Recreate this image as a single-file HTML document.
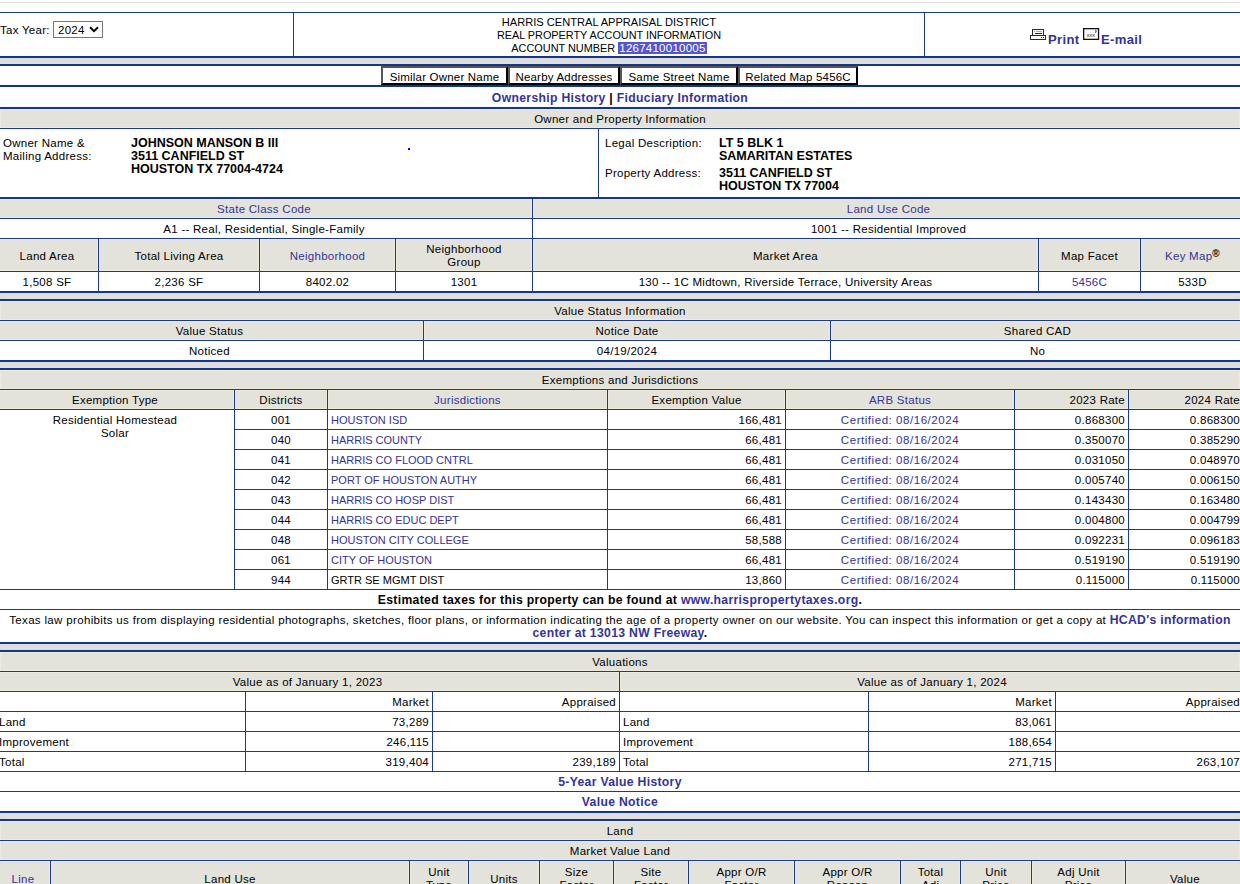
<!DOCTYPE html>
<html><head><meta charset="utf-8"><title>HCAD</title>
<style>
html,body{margin:0;padding:0;background:#fff}
body{width:1240px;height:884px;overflow:hidden;position:relative;font-family:"Liberation Sans",sans-serif;font-size:11.5px;letter-spacing:0.27px;color:#000}
.r{position:absolute}
.g{background:#e3e3dc;box-shadow:inset 0 0 0 1px #ecebde}
.t{position:absolute;display:flex;line-height:13px;white-space:nowrap;box-sizing:border-box}
.in{position:relative;top:1px}
.c{justify-content:center;text-align:center}
.l{justify-content:flex-start;padding-left:3px}
.rt{justify-content:flex-end;padding-right:3px}
.r5{padding-right:4px}
.b{font-weight:bold;font-size:12.2px;letter-spacing:0.32px}
.bc{font-weight:bold;font-size:12.5px;letter-spacing:0}
.a{color:#333399}
.txt{line-height:13px;white-space:nowrap}
.uc{font-size:11px;letter-spacing:0}
.up{font-size:11.2px;line-height:13px;letter-spacing:0}
.sel{background:#5656cc;color:#fff;font-size:11.5px;letter-spacing:0.25px;padding:0 1px}
.dt{letter-spacing:0.55px}
.reg{font-size:10px;font-weight:bold;color:#000;vertical-align:top;position:relative;top:-1px;line-height:9px;margin-left:0px}
.btn{position:absolute;border:2px solid;border-color:#555 #000 #000 #555;background:#fff;line-height:19px;text-align:center;white-space:nowrap;font-size:11.5px;letter-spacing:0.2px}
</style></head><body>
<div class="r" style="left:0px;top:2px;width:1240px;height:1px;background:#e0e2de"></div>
<div class="r" style="left:0px;top:12px;width:1240px;height:1px;background:#1b3a8b"></div>
<div class="r" style="left:293px;top:12px;width:1px;height:44px;background:#1b3a8b"></div>
<div class="r" style="left:924px;top:12px;width:1px;height:44px;background:#1b3a8b"></div>
<div class="r" style="left:0px;top:56px;width:1240px;height:2px;background:#16368a"></div>
<div class="r txt" style="left:0px;top:24px">Tax Year:</div>
<div class="r" style="left:53px;top:21px;width:48px;height:15px;border:1px solid #767676;background:#fff"></div>
<div class="r txt" style="left:58px;top:24px">2024</div>
<svg class="r" style="left:89px;top:26px" width="10" height="7" viewBox="0 0 10 7"><path d="M1 1.2 L5 5.2 L9 1.2" fill="none" stroke="#000" stroke-width="2"/></svg>
<div class="t c" style="left:294px;top:13px;width:630px;height:43px;align-items:center;"><span class="in"><div class="up"><span style="font-size:11.1px">HARRIS CENTRAL APPRAISAL DISTRICT</span><br><span style="font-size:10.85px">REAL PROPERTY ACCOUNT INFORMATION</span><br><span style="font-size:10.9px">ACCOUNT NUMBER </span><span class="sel">1267410010005</span></div></span></div>
<svg class="r" style="left:1030px;top:29px" width="17" height="11" viewBox="0 0 17 11" shape-rendering="crispEdges"><rect x="2.5" y="0.5" width="11" height="6" fill="#fff" stroke="#2a2a2a" stroke-width="1"/><rect x="4" y="2" width="1" height="1" fill="#7fb8f0"/><rect x="6" y="2" width="6" height="1" fill="#7fb8f0"/><rect x="5" y="4" width="7" height="1" fill="#2a2a2a"/><rect x="0.5" y="6.5" width="15" height="4" fill="#fff" stroke="#2a2a2a" stroke-width="1"/><rect x="11" y="8" width="1" height="1" fill="#2a2a2a"/><rect x="13" y="8" width="1" height="1" fill="#2a2a2a"/></svg>
<div class="r b a" style="left:1048px;top:33px;line-height:13px;font-size:13.1px">Print</div>
<svg class="r" style="left:1083px;top:28px" width="17" height="12" viewBox="0 0 17 12"><rect x="0.65" y="0.65" width="14.9" height="10.7" fill="#fff" stroke="#111" stroke-width="1.3"/><text x="3.6" y="8.9" font-size="6.2" font-family="Liberation Sans" fill="#333" letter-spacing="-0.4">xxx</text><path d="M12 2 Q14.2 2.8 12.2 4.8" fill="none" stroke="#3a6cc8" stroke-width="1.3"/></svg>
<div class="r b a" style="left:1101px;top:33px;line-height:13px;font-size:13.1px">E-mail</div>
<div class="r" style="left:0px;top:58px;width:1240px;height:6px;background:#dedede"></div>
<div class="r" style="left:0px;top:64px;width:1240px;height:2px;background:#16368a"></div>
<div class="btn" style="left:381px;top:66px;width:123px;height:15px">Similar Owner Name</div>
<div class="btn" style="left:508px;top:66px;width:108px;height:15px">Nearby Addresses</div>
<div class="btn" style="left:620px;top:66px;width:114px;height:15px">Same Street Name</div>
<div class="btn" style="left:738px;top:66px;width:116px;height:15px">Related Map 5456C</div>
<div class="r" style="left:0px;top:85px;width:1240px;height:2px;background:#16368a"></div>
<div class="t c" style="left:-4px;top:87px;width:1248px;height:20px;align-items:center;"><span class="in"><span class="a b">Ownership History</span><span class="b"> | </span><span class="a b">Fiduciary Information</span></span></div>
<div class="r" style="left:0px;top:107px;width:1240px;height:2px;background:#16368a"></div>
<div class="r g" style="left:0px;top:109px;width:1240px;height:19px"></div>
<div class="t c" style="left:-4px;top:109px;width:1248px;height:19px;align-items:center;"><span class="in">Owner and Property Information</span></div>
<div class="r" style="left:0px;top:128px;width:1240px;height:1px;background:#1b3a8b"></div>
<div class="r" style="left:598px;top:129px;width:1px;height:68px;background:#1b3a8b"></div>
<div class="r txt" style="left:3px;top:136.5px">Owner Name &amp;<br>Mailing Address:</div>
<div class="r txt bc" style="left:131px;top:136.5px">JOHNSON MANSON B III<br>3511 CANFIELD ST<br>HOUSTON TX 77004-4724</div>
<div class="r" style="left:408px;top:148px;width:2px;height:2px;background:#0000ff"></div>
<div class="r txt" style="left:605px;top:136.5px">Legal Description:</div>
<div class="r txt bc" style="left:719px;top:136.5px">LT 5 BLK 1<br>SAMARITAN ESTATES</div>
<div class="r txt" style="left:605px;top:166.5px">Property Address:</div>
<div class="r txt bc" style="left:719px;top:166.5px">3511 CANFIELD ST<br>HOUSTON TX 77004</div>
<div class="r" style="left:0px;top:197px;width:1240px;height:2px;background:#16368a"></div>
<div class="r g" style="left:-4px;top:199px;width:536px;height:19px"></div>
<div class="r g" style="left:533px;top:199px;width:711px;height:19px"></div>
<div class="t c" style="left:-4px;top:199px;width:536px;height:19px;align-items:center;"><span class="in"><span class="a">State Class Code</span></span></div>
<div class="t c" style="left:533px;top:199px;width:711px;height:19px;align-items:center;"><span class="in"><span class="a">Land Use Code</span></span></div>
<div class="r" style="left:0px;top:218px;width:1240px;height:1px;background:#1b3a8b"></div>
<div class="t c" style="left:-4px;top:219px;width:536px;height:19px;align-items:center;"><span class="in">A1 -- Real, Residential, Single-Family</span></div>
<div class="t c" style="left:533px;top:219px;width:711px;height:19px;align-items:center;"><span class="in">1001 -- Residential Improved</span></div>
<div class="r" style="left:0px;top:238px;width:1240px;height:1px;background:#1b3a8b"></div>
<div class="r g" style="left:-4px;top:239px;width:102px;height:32px"></div>
<div class="t c" style="left:-4px;top:239px;width:102px;height:32px;align-items:center;"><span class="in">Land Area</span></div>
<div class="t c" style="left:-4px;top:272px;width:102px;height:19px;align-items:center;"><span class="in">1,508 SF</span></div>
<div class="r g" style="left:99px;top:239px;width:160px;height:32px"></div>
<div class="t c" style="left:99px;top:239px;width:160px;height:32px;align-items:center;"><span class="in">Total Living Area</span></div>
<div class="t c" style="left:99px;top:272px;width:160px;height:19px;align-items:center;"><span class="in">2,236 SF</span></div>
<div class="r g" style="left:260px;top:239px;width:135px;height:32px"></div>
<div class="t c" style="left:260px;top:239px;width:135px;height:32px;align-items:center;"><span class="in"><span class="a">Neighborhood</span></span></div>
<div class="t c" style="left:260px;top:272px;width:135px;height:19px;align-items:center;"><span class="in">8402.02</span></div>
<div class="r g" style="left:396px;top:239px;width:136px;height:32px"></div>
<div class="t c" style="left:396px;top:239px;width:136px;height:32px;align-items:center;"><span class="in">Neighborhood<br>Group</span></div>
<div class="t c" style="left:396px;top:272px;width:136px;height:19px;align-items:center;"><span class="in">1301</span></div>
<div class="r g" style="left:533px;top:239px;width:505px;height:32px"></div>
<div class="t c" style="left:533px;top:239px;width:505px;height:32px;align-items:center;"><span class="in">Market Area</span></div>
<div class="t c" style="left:533px;top:272px;width:505px;height:19px;align-items:center;"><span class="in">130 -- 1C Midtown, Riverside Terrace, University Areas</span></div>
<div class="r g" style="left:1039px;top:239px;width:101px;height:32px"></div>
<div class="t c" style="left:1039px;top:239px;width:101px;height:32px;align-items:center;"><span class="in">Map Facet</span></div>
<div class="t c" style="left:1039px;top:272px;width:101px;height:19px;align-items:center;"><span class="in"><span class="a">5456C</span></span></div>
<div class="r g" style="left:1141px;top:239px;width:103px;height:32px"></div>
<div class="t c" style="left:1141px;top:239px;width:103px;height:32px;align-items:center;"><span class="in"><span class="a">Key Map</span><sup class="reg">&reg;</sup></span></div>
<div class="t c" style="left:1141px;top:272px;width:103px;height:19px;align-items:center;"><span class="in">533D</span></div>
<div class="r" style="left:532px;top:199px;width:1px;height:92px;background:#1b3a8b"></div>
<div class="r" style="left:98px;top:238px;width:1px;height:53px;background:#1b3a8b"></div>
<div class="r" style="left:259px;top:238px;width:1px;height:53px;background:#1b3a8b"></div>
<div class="r" style="left:395px;top:238px;width:1px;height:53px;background:#1b3a8b"></div>
<div class="r" style="left:532px;top:238px;width:1px;height:53px;background:#1b3a8b"></div>
<div class="r" style="left:1038px;top:238px;width:1px;height:53px;background:#1b3a8b"></div>
<div class="r" style="left:1140px;top:238px;width:1px;height:53px;background:#1b3a8b"></div>
<div class="r" style="left:0px;top:271px;width:1240px;height:1px;background:#1b3a8b"></div>
<div class="r" style="left:0px;top:291px;width:1240px;height:2px;background:#16368a"></div>
<div class="r" style="left:0px;top:293px;width:1240px;height:6px;background:#dedede"></div>
<div class="r" style="left:0px;top:299px;width:1240px;height:2px;background:#16368a"></div>
<div class="r g" style="left:0px;top:301px;width:1240px;height:19px"></div>
<div class="t c" style="left:-4px;top:301px;width:1248px;height:19px;align-items:center;"><span class="in">Value Status Information</span></div>
<div class="r" style="left:0px;top:320px;width:1240px;height:1px;background:#1b3a8b"></div>
<div class="r g" style="left:-4px;top:321px;width:427px;height:19px"></div>
<div class="t c" style="left:-4px;top:321px;width:427px;height:19px;align-items:center;"><span class="in">Value Status</span></div>
<div class="t c" style="left:-4px;top:341px;width:427px;height:19px;align-items:center;"><span class="in">Noticed</span></div>
<div class="r g" style="left:424px;top:321px;width:406px;height:19px"></div>
<div class="t c" style="left:424px;top:321px;width:406px;height:19px;align-items:center;"><span class="in">Notice Date</span></div>
<div class="t c" style="left:424px;top:341px;width:406px;height:19px;align-items:center;"><span class="in">04/19/2024</span></div>
<div class="r g" style="left:831px;top:321px;width:413px;height:19px"></div>
<div class="t c" style="left:831px;top:321px;width:413px;height:19px;align-items:center;"><span class="in">Shared CAD</span></div>
<div class="t c" style="left:831px;top:341px;width:413px;height:19px;align-items:center;"><span class="in">No</span></div>
<div class="r" style="left:0px;top:340px;width:1240px;height:1px;background:#1b3a8b"></div>
<div class="r" style="left:423px;top:320px;width:1px;height:40px;background:#1b3a8b"></div>
<div class="r" style="left:830px;top:320px;width:1px;height:40px;background:#1b3a8b"></div>
<div class="r" style="left:0px;top:360px;width:1240px;height:2px;background:#16368a"></div>
<div class="r" style="left:0px;top:362px;width:1240px;height:6px;background:#dedede"></div>
<div class="r" style="left:0px;top:368px;width:1240px;height:2px;background:#16368a"></div>
<div class="r g" style="left:0px;top:370px;width:1240px;height:19px"></div>
<div class="t c" style="left:-4px;top:370px;width:1248px;height:19px;align-items:center;"><span class="in">Exemptions and Jurisdictions</span></div>
<div class="r" style="left:0px;top:389px;width:1240px;height:1px;background:#1b3a8b"></div>
<div class="r g" style="left:-4px;top:390px;width:238px;height:19px"></div>
<div class="t c" style="left:-4px;top:390px;width:238px;height:19px;align-items:center;"><span class="in">Exemption Type</span></div>
<div class="r g" style="left:235px;top:390px;width:92px;height:19px"></div>
<div class="t c" style="left:235px;top:390px;width:92px;height:19px;align-items:center;"><span class="in">Districts</span></div>
<div class="r g" style="left:328px;top:390px;width:279px;height:19px"></div>
<div class="t c" style="left:328px;top:390px;width:279px;height:19px;align-items:center;"><span class="in"><span class="a">Jurisdictions</span></span></div>
<div class="r g" style="left:608px;top:390px;width:177px;height:19px"></div>
<div class="t c" style="left:608px;top:390px;width:177px;height:19px;align-items:center;"><span class="in">Exemption Value</span></div>
<div class="r g" style="left:786px;top:390px;width:228px;height:19px"></div>
<div class="t c" style="left:786px;top:390px;width:228px;height:19px;align-items:center;"><span class="in"><span class="a">ARB Status</span></span></div>
<div class="r g" style="left:1015px;top:390px;width:113px;height:19px"></div>
<div class="t rt" style="left:1015px;top:390px;width:113px;height:19px;align-items:center;"><span class="in">2023 Rate</span></div>
<div class="r g" style="left:1129px;top:390px;width:115px;height:19px"></div>
<div class="t rt r5" style="left:1129px;top:390px;width:115px;height:19px;align-items:center;"><span class="in">2024 Rate</span></div>
<div class="r" style="left:0px;top:409px;width:1240px;height:1px;background:#1b3a8b"></div>
<div class="t c" style="left:-4px;top:410px;width:238px;height:179px;align-items:flex-start;padding-top:3px"><span class="in">Residential Homestead<br>Solar</span></div>
<div class="t c" style="left:235px;top:410px;width:92px;height:19px;align-items:center;"><span class="in">001</span></div>
<div class="t l" style="left:328px;top:410px;width:279px;height:19px;align-items:center;"><span class="in"><span class="uc"><span class="a">HOUSTON ISD</span></span></span></div>
<div class="t rt" style="left:608px;top:410px;width:177px;height:19px;align-items:center;"><span class="in">166,481</span></div>
<div class="t c" style="left:786px;top:410px;width:228px;height:19px;align-items:center;"><span class="in"><span class="a dt">Certified: 08/16/2024</span></span></div>
<div class="t rt" style="left:1015px;top:410px;width:113px;height:19px;align-items:center;"><span class="in">0.868300</span></div>
<div class="t rt" style="left:1129px;top:410px;width:115px;height:19px;align-items:center;padding-right:4px"><span class="in">0.868300</span></div>
<div class="r" style="left:234px;top:429px;width:1006px;height:1px;background:#1b3a8b"></div>
<div class="t c" style="left:235px;top:430px;width:92px;height:19px;align-items:center;"><span class="in">040</span></div>
<div class="t l" style="left:328px;top:430px;width:279px;height:19px;align-items:center;"><span class="in"><span class="uc"><span class="a">HARRIS COUNTY</span></span></span></div>
<div class="t rt" style="left:608px;top:430px;width:177px;height:19px;align-items:center;"><span class="in">66,481</span></div>
<div class="t c" style="left:786px;top:430px;width:228px;height:19px;align-items:center;"><span class="in"><span class="a dt">Certified: 08/16/2024</span></span></div>
<div class="t rt" style="left:1015px;top:430px;width:113px;height:19px;align-items:center;"><span class="in">0.350070</span></div>
<div class="t rt" style="left:1129px;top:430px;width:115px;height:19px;align-items:center;padding-right:4px"><span class="in">0.385290</span></div>
<div class="r" style="left:234px;top:449px;width:1006px;height:1px;background:#1b3a8b"></div>
<div class="t c" style="left:235px;top:450px;width:92px;height:19px;align-items:center;"><span class="in">041</span></div>
<div class="t l" style="left:328px;top:450px;width:279px;height:19px;align-items:center;"><span class="in"><span class="uc"><span class="a">HARRIS CO FLOOD CNTRL</span></span></span></div>
<div class="t rt" style="left:608px;top:450px;width:177px;height:19px;align-items:center;"><span class="in">66,481</span></div>
<div class="t c" style="left:786px;top:450px;width:228px;height:19px;align-items:center;"><span class="in"><span class="a dt">Certified: 08/16/2024</span></span></div>
<div class="t rt" style="left:1015px;top:450px;width:113px;height:19px;align-items:center;"><span class="in">0.031050</span></div>
<div class="t rt" style="left:1129px;top:450px;width:115px;height:19px;align-items:center;padding-right:4px"><span class="in">0.048970</span></div>
<div class="r" style="left:234px;top:469px;width:1006px;height:1px;background:#1b3a8b"></div>
<div class="t c" style="left:235px;top:470px;width:92px;height:19px;align-items:center;"><span class="in">042</span></div>
<div class="t l" style="left:328px;top:470px;width:279px;height:19px;align-items:center;"><span class="in"><span class="uc"><span class="a">PORT OF HOUSTON AUTHY</span></span></span></div>
<div class="t rt" style="left:608px;top:470px;width:177px;height:19px;align-items:center;"><span class="in">66,481</span></div>
<div class="t c" style="left:786px;top:470px;width:228px;height:19px;align-items:center;"><span class="in"><span class="a dt">Certified: 08/16/2024</span></span></div>
<div class="t rt" style="left:1015px;top:470px;width:113px;height:19px;align-items:center;"><span class="in">0.005740</span></div>
<div class="t rt" style="left:1129px;top:470px;width:115px;height:19px;align-items:center;padding-right:4px"><span class="in">0.006150</span></div>
<div class="r" style="left:234px;top:489px;width:1006px;height:1px;background:#1b3a8b"></div>
<div class="t c" style="left:235px;top:490px;width:92px;height:19px;align-items:center;"><span class="in">043</span></div>
<div class="t l" style="left:328px;top:490px;width:279px;height:19px;align-items:center;"><span class="in"><span class="uc"><span class="a">HARRIS CO HOSP DIST</span></span></span></div>
<div class="t rt" style="left:608px;top:490px;width:177px;height:19px;align-items:center;"><span class="in">66,481</span></div>
<div class="t c" style="left:786px;top:490px;width:228px;height:19px;align-items:center;"><span class="in"><span class="a dt">Certified: 08/16/2024</span></span></div>
<div class="t rt" style="left:1015px;top:490px;width:113px;height:19px;align-items:center;"><span class="in">0.143430</span></div>
<div class="t rt" style="left:1129px;top:490px;width:115px;height:19px;align-items:center;padding-right:4px"><span class="in">0.163480</span></div>
<div class="r" style="left:234px;top:509px;width:1006px;height:1px;background:#1b3a8b"></div>
<div class="t c" style="left:235px;top:510px;width:92px;height:19px;align-items:center;"><span class="in">044</span></div>
<div class="t l" style="left:328px;top:510px;width:279px;height:19px;align-items:center;"><span class="in"><span class="uc"><span class="a">HARRIS CO EDUC DEPT</span></span></span></div>
<div class="t rt" style="left:608px;top:510px;width:177px;height:19px;align-items:center;"><span class="in">66,481</span></div>
<div class="t c" style="left:786px;top:510px;width:228px;height:19px;align-items:center;"><span class="in"><span class="a dt">Certified: 08/16/2024</span></span></div>
<div class="t rt" style="left:1015px;top:510px;width:113px;height:19px;align-items:center;"><span class="in">0.004800</span></div>
<div class="t rt" style="left:1129px;top:510px;width:115px;height:19px;align-items:center;padding-right:4px"><span class="in">0.004799</span></div>
<div class="r" style="left:234px;top:529px;width:1006px;height:1px;background:#1b3a8b"></div>
<div class="t c" style="left:235px;top:530px;width:92px;height:19px;align-items:center;"><span class="in">048</span></div>
<div class="t l" style="left:328px;top:530px;width:279px;height:19px;align-items:center;"><span class="in"><span class="uc"><span class="a">HOUSTON CITY COLLEGE</span></span></span></div>
<div class="t rt" style="left:608px;top:530px;width:177px;height:19px;align-items:center;"><span class="in">58,588</span></div>
<div class="t c" style="left:786px;top:530px;width:228px;height:19px;align-items:center;"><span class="in"><span class="a dt">Certified: 08/16/2024</span></span></div>
<div class="t rt" style="left:1015px;top:530px;width:113px;height:19px;align-items:center;"><span class="in">0.092231</span></div>
<div class="t rt" style="left:1129px;top:530px;width:115px;height:19px;align-items:center;padding-right:4px"><span class="in">0.096183</span></div>
<div class="r" style="left:234px;top:549px;width:1006px;height:1px;background:#1b3a8b"></div>
<div class="t c" style="left:235px;top:550px;width:92px;height:19px;align-items:center;"><span class="in">061</span></div>
<div class="t l" style="left:328px;top:550px;width:279px;height:19px;align-items:center;"><span class="in"><span class="uc"><span class="a">CITY OF HOUSTON</span></span></span></div>
<div class="t rt" style="left:608px;top:550px;width:177px;height:19px;align-items:center;"><span class="in">66,481</span></div>
<div class="t c" style="left:786px;top:550px;width:228px;height:19px;align-items:center;"><span class="in"><span class="a dt">Certified: 08/16/2024</span></span></div>
<div class="t rt" style="left:1015px;top:550px;width:113px;height:19px;align-items:center;"><span class="in">0.519190</span></div>
<div class="t rt" style="left:1129px;top:550px;width:115px;height:19px;align-items:center;padding-right:4px"><span class="in">0.519190</span></div>
<div class="r" style="left:234px;top:569px;width:1006px;height:1px;background:#1b3a8b"></div>
<div class="t c" style="left:235px;top:570px;width:92px;height:19px;align-items:center;"><span class="in">944</span></div>
<div class="t l" style="left:328px;top:570px;width:279px;height:19px;align-items:center;"><span class="in"><span class="uc">GRTR SE MGMT DIST</span></span></div>
<div class="t rt" style="left:608px;top:570px;width:177px;height:19px;align-items:center;"><span class="in">13,860</span></div>
<div class="t c" style="left:786px;top:570px;width:228px;height:19px;align-items:center;"><span class="in"><span class="a dt">Certified: 08/16/2024</span></span></div>
<div class="t rt" style="left:1015px;top:570px;width:113px;height:19px;align-items:center;"><span class="in">0.115000</span></div>
<div class="t rt" style="left:1129px;top:570px;width:115px;height:19px;align-items:center;padding-right:4px"><span class="in">0.115000</span></div>
<div class="r" style="left:234px;top:389px;width:1px;height:200px;background:#1b3a8b"></div>
<div class="r" style="left:327px;top:389px;width:1px;height:200px;background:#1b3a8b"></div>
<div class="r" style="left:607px;top:389px;width:1px;height:200px;background:#1b3a8b"></div>
<div class="r" style="left:785px;top:389px;width:1px;height:200px;background:#1b3a8b"></div>
<div class="r" style="left:1014px;top:389px;width:1px;height:200px;background:#1b3a8b"></div>
<div class="r" style="left:1128px;top:389px;width:1px;height:200px;background:#1b3a8b"></div>
<div class="r" style="left:0px;top:589px;width:1240px;height:1px;background:#1b3a8b"></div>
<div class="t c" style="left:-4px;top:590px;width:1248px;height:19px;align-items:center;"><span class="in"><span class="b">Estimated taxes for this property can be found at <span class="a b">www.harrispropertytaxes.org</span>.</span></span></div>
<div class="r" style="left:0px;top:609px;width:1240px;height:1px;background:#1b3a8b"></div>
<div class="t c" style="left:-4px;top:610px;width:1248px;height:32px;align-items:center;white-space:normal;padding:0 6px;font-size:11.5px;letter-spacing:0.335px"><span class="in"><div style="text-align:center">Texas law prohibits us from displaying residential photographs, sketches, floor plans, or information indicating the age of a property owner on our website. You can inspect this information or get a copy at <span class="a b">HCAD's information center at 13013 NW Freeway</span><span class="b">.</span></div></span></div>
<div class="r" style="left:0px;top:642px;width:1240px;height:2px;background:#16368a"></div>
<div class="r" style="left:0px;top:644px;width:1240px;height:6px;background:#dedede"></div>
<div class="r" style="left:0px;top:650px;width:1240px;height:2px;background:#16368a"></div>
<div class="r g" style="left:0px;top:652px;width:1240px;height:19px"></div>
<div class="t c" style="left:-4px;top:652px;width:1248px;height:19px;align-items:center;"><span class="in">Valuations</span></div>
<div class="r" style="left:0px;top:671px;width:1240px;height:1px;background:#1b3a8b"></div>
<div class="r g" style="left:-4px;top:672px;width:623px;height:19px"></div>
<div class="r g" style="left:620px;top:672px;width:624px;height:19px"></div>
<div class="t c" style="left:-4px;top:672px;width:623px;height:19px;align-items:center;"><span class="in">Value as of January 1, 2023</span></div>
<div class="t c" style="left:620px;top:672px;width:624px;height:19px;align-items:center;"><span class="in">Value as of January 1, 2024</span></div>
<div class="r" style="left:0px;top:691px;width:1240px;height:1px;background:#1b3a8b"></div>
<div class="t l" style="left:-4px;top:692px;width:249px;height:19px;align-items:center;"><span class="in"></span></div>
<div class="t rt" style="left:246px;top:692px;width:186px;height:19px;align-items:center;"><span class="in">Market</span></div>
<div class="t rt" style="left:433px;top:692px;width:186px;height:19px;align-items:center;"><span class="in">Appraised</span></div>
<div class="t l" style="left:620px;top:692px;width:248px;height:19px;align-items:center;"><span class="in"></span></div>
<div class="t rt" style="left:869px;top:692px;width:186px;height:19px;align-items:center;"><span class="in">Market</span></div>
<div class="t rt" style="left:1056px;top:692px;width:188px;height:19px;align-items:center;padding-right:4px"><span class="in">Appraised</span></div>
<div class="r" style="left:0px;top:711px;width:1240px;height:1px;background:#1b3a8b"></div>
<div class="t l" style="left:-4px;top:712px;width:249px;height:19px;align-items:center;"><span class="in">Land</span></div>
<div class="t rt" style="left:246px;top:712px;width:186px;height:19px;align-items:center;"><span class="in">73,289</span></div>
<div class="t rt" style="left:433px;top:712px;width:186px;height:19px;align-items:center;"><span class="in"></span></div>
<div class="t l" style="left:620px;top:712px;width:248px;height:19px;align-items:center;"><span class="in">Land</span></div>
<div class="t rt" style="left:869px;top:712px;width:186px;height:19px;align-items:center;"><span class="in">83,061</span></div>
<div class="t rt" style="left:1056px;top:712px;width:188px;height:19px;align-items:center;padding-right:4px"><span class="in"></span></div>
<div class="r" style="left:0px;top:731px;width:1240px;height:1px;background:#1b3a8b"></div>
<div class="t l" style="left:-4px;top:732px;width:249px;height:19px;align-items:center;"><span class="in">Improvement</span></div>
<div class="t rt" style="left:246px;top:732px;width:186px;height:19px;align-items:center;"><span class="in">246,115</span></div>
<div class="t rt" style="left:433px;top:732px;width:186px;height:19px;align-items:center;"><span class="in"></span></div>
<div class="t l" style="left:620px;top:732px;width:248px;height:19px;align-items:center;"><span class="in">Improvement</span></div>
<div class="t rt" style="left:869px;top:732px;width:186px;height:19px;align-items:center;"><span class="in">188,654</span></div>
<div class="t rt" style="left:1056px;top:732px;width:188px;height:19px;align-items:center;padding-right:4px"><span class="in"></span></div>
<div class="r" style="left:0px;top:751px;width:1240px;height:1px;background:#1b3a8b"></div>
<div class="t l" style="left:-4px;top:752px;width:249px;height:19px;align-items:center;"><span class="in">Total</span></div>
<div class="t rt" style="left:246px;top:752px;width:186px;height:19px;align-items:center;"><span class="in">319,404</span></div>
<div class="t rt" style="left:433px;top:752px;width:186px;height:19px;align-items:center;"><span class="in">239,189</span></div>
<div class="t l" style="left:620px;top:752px;width:248px;height:19px;align-items:center;"><span class="in">Total</span></div>
<div class="t rt" style="left:869px;top:752px;width:186px;height:19px;align-items:center;"><span class="in">271,715</span></div>
<div class="t rt" style="left:1056px;top:752px;width:188px;height:19px;align-items:center;padding-right:4px"><span class="in">263,107</span></div>
<div class="r" style="left:0px;top:771px;width:1240px;height:1px;background:#1b3a8b"></div>
<div class="r" style="left:245px;top:691px;width:1px;height:80px;background:#1b3a8b"></div>
<div class="r" style="left:432px;top:691px;width:1px;height:80px;background:#1b3a8b"></div>
<div class="r" style="left:619px;top:671px;width:1px;height:100px;background:#1b3a8b"></div>
<div class="r" style="left:868px;top:691px;width:1px;height:80px;background:#1b3a8b"></div>
<div class="r" style="left:1055px;top:691px;width:1px;height:80px;background:#1b3a8b"></div>
<div class="t c" style="left:-4px;top:772px;width:1248px;height:19px;align-items:center;"><span class="in"><span class="a b">5-Year Value History</span></span></div>
<div class="r" style="left:0px;top:791px;width:1240px;height:1px;background:#1b3a8b"></div>
<div class="t c" style="left:-4px;top:792px;width:1248px;height:19px;align-items:center;"><span class="in"><span class="a b">Value Notice</span></span></div>
<div class="r" style="left:0px;top:811px;width:1240px;height:2px;background:#16368a"></div>
<div class="r" style="left:0px;top:813px;width:1240px;height:6px;background:#dedede"></div>
<div class="r" style="left:0px;top:819px;width:1240px;height:2px;background:#16368a"></div>
<div class="r g" style="left:0px;top:821px;width:1240px;height:19px"></div>
<div class="t c" style="left:-4px;top:821px;width:1248px;height:19px;align-items:center;"><span class="in">Land</span></div>
<div class="r" style="left:0px;top:840px;width:1240px;height:1px;background:#1b3a8b"></div>
<div class="r g" style="left:0px;top:841px;width:1240px;height:19px"></div>
<div class="t c" style="left:-4px;top:841px;width:1248px;height:19px;align-items:center;"><span class="in">Market Value Land</span></div>
<div class="r" style="left:0px;top:860px;width:1240px;height:1px;background:#1b3a8b"></div>
<div class="r g" style="left:-4px;top:861px;width:54px;height:34px"></div>
<div class="t c" style="left:-4px;top:861px;width:54px;height:34px;align-items:center;"><span class="in"><span class="a">Line</span></span></div>
<div class="r g" style="left:51px;top:861px;width:358px;height:34px"></div>
<div class="t c" style="left:51px;top:861px;width:358px;height:34px;align-items:center;"><span class="in">Land Use</span></div>
<div class="r g" style="left:410px;top:861px;width:58px;height:34px"></div>
<div class="t c" style="left:410px;top:861px;width:58px;height:34px;align-items:center;"><span class="in">Unit<br>Type</span></div>
<div class="r g" style="left:469px;top:861px;width:70px;height:34px"></div>
<div class="t c" style="left:469px;top:861px;width:70px;height:34px;align-items:center;"><span class="in">Units</span></div>
<div class="r g" style="left:540px;top:861px;width:73px;height:34px"></div>
<div class="t c" style="left:540px;top:861px;width:73px;height:34px;align-items:center;"><span class="in">Size<br>Factor</span></div>
<div class="r g" style="left:614px;top:861px;width:74px;height:34px"></div>
<div class="t c" style="left:614px;top:861px;width:74px;height:34px;align-items:center;"><span class="in">Site<br>Factor</span></div>
<div class="r g" style="left:689px;top:861px;width:105px;height:34px"></div>
<div class="t c" style="left:689px;top:861px;width:105px;height:34px;align-items:center;"><span class="in">Appr O/R<br>Factor</span></div>
<div class="r g" style="left:795px;top:861px;width:105px;height:34px"></div>
<div class="t c" style="left:795px;top:861px;width:105px;height:34px;align-items:center;"><span class="in">Appr O/R<br>Reason</span></div>
<div class="r g" style="left:901px;top:861px;width:59px;height:34px"></div>
<div class="t c" style="left:901px;top:861px;width:59px;height:34px;align-items:center;"><span class="in">Total<br>Adj</span></div>
<div class="r g" style="left:961px;top:861px;width:70px;height:34px"></div>
<div class="t c" style="left:961px;top:861px;width:70px;height:34px;align-items:center;"><span class="in">Unit<br>Price</span></div>
<div class="r g" style="left:1032px;top:861px;width:93px;height:34px"></div>
<div class="t c" style="left:1032px;top:861px;width:93px;height:34px;align-items:center;"><span class="in">Adj Unit<br>Price</span></div>
<div class="r g" style="left:1126px;top:861px;width:118px;height:34px"></div>
<div class="t c" style="left:1126px;top:861px;width:118px;height:34px;align-items:center;"><span class="in">Value</span></div>
<div class="r" style="left:50px;top:860px;width:1px;height:35px;background:#1b3a8b"></div>
<div class="r" style="left:409px;top:860px;width:1px;height:35px;background:#1b3a8b"></div>
<div class="r" style="left:468px;top:860px;width:1px;height:35px;background:#1b3a8b"></div>
<div class="r" style="left:539px;top:860px;width:1px;height:35px;background:#1b3a8b"></div>
<div class="r" style="left:613px;top:860px;width:1px;height:35px;background:#1b3a8b"></div>
<div class="r" style="left:688px;top:860px;width:1px;height:35px;background:#1b3a8b"></div>
<div class="r" style="left:794px;top:860px;width:1px;height:35px;background:#1b3a8b"></div>
<div class="r" style="left:900px;top:860px;width:1px;height:35px;background:#1b3a8b"></div>
<div class="r" style="left:960px;top:860px;width:1px;height:35px;background:#1b3a8b"></div>
<div class="r" style="left:1031px;top:860px;width:1px;height:35px;background:#1b3a8b"></div>
<div class="r" style="left:1125px;top:860px;width:1px;height:35px;background:#1b3a8b"></div>
</body></html>
